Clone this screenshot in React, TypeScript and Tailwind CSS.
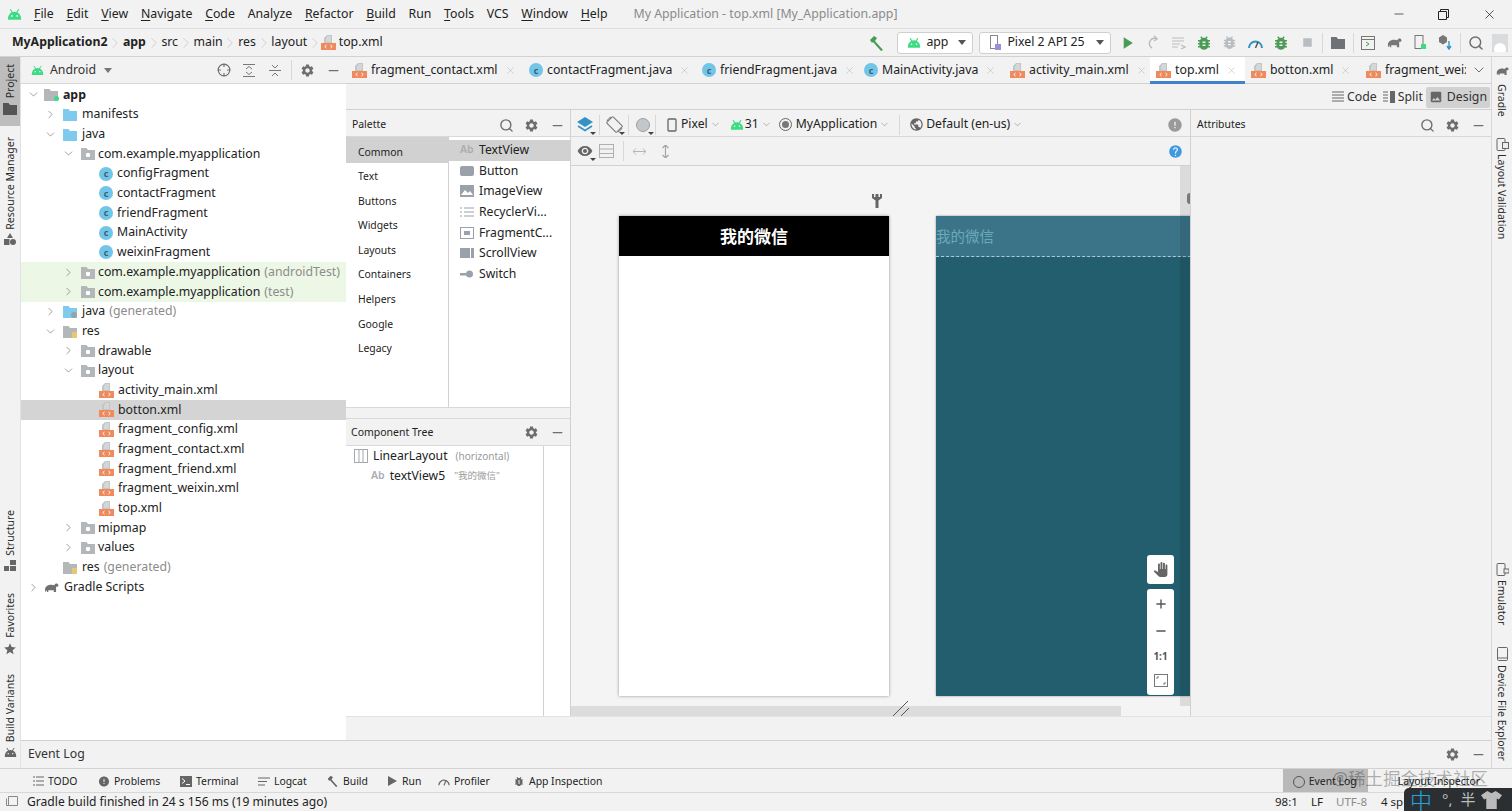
import { ChevronDown, ChevronRight, Search, X, Minus, Plus, Crosshair } from "lucide-react";
import { MdSettings, MdPanTool, MdError, MdHelp, MdVisibility, MdPublic, MdImage, MdBugReport, MdPlayArrow, MdStop, MdStar } from "react-icons/md";

const GRAY = "#6e6e6e";

function Android({ className = "w-[14px] h-[11px]", color = "#3ddc84" }: { className?: string; color?: string }) {
  return (
    <svg className={className} viewBox="0 0 16 12" fill={color}>
      <path d="M1 11C1 7 4 3.5 8 3.5S15 7 15 11V12H1Z" />
      <path d="M3.5 1 6 5M12.5 1 10 5" stroke={color} strokeWidth="1.2" />
      <circle cx="5.2" cy="8" r=".9" fill="#fff" />
      <circle cx="10.8" cy="8" r=".9" fill="#fff" />
    </svg>
  );
}

function Folder({ color = "#b3b7ba", dot = false }: { color?: string; dot?: boolean }) {
  return (
    <svg className="w-[14px] h-[13px] shrink-0" viewBox="0 0 14 13">
      <path d="M0 1H5.5L7 3H14V13H0Z" fill={color} />
      {dot && <rect x="5" y="6" width="4" height="4" rx="1" fill="#fff" />}
    </svg>
  );
}

function ClassIcon() {
  return (
    <span className="w-[14px] h-[14px] shrink-0 rounded-full bg-[#70c5e8] flex items-center justify-center text-[9px] leading-none text-[#3f5f6f] font-bold">
      c
    </span>
  );
}

function XmlIcon() {
  return (
    <svg className="w-[15px] h-[15px] shrink-0" viewBox="0 0 15 15">
      <path d="M6 0H11V8H3V3Z" fill="#c3c5c7" />
      <path d="M6 2H10M5 4H10M5 6H10" stroke="#fff" strokeWidth=".6" />
      <rect x="0" y="8" width="15" height="7" fill="#ee8a5c" />
      <path d="M5.5 10 3.8 11.5 5.5 13M9.5 10 11.2 11.5 9.5 13" stroke="#fff" strokeWidth="1" fill="none" />
    </svg>
  );
}

function Elephant({ className = "w-[16px] h-[12px]", color = "#6e7073" }: { className?: string; color?: string }) {
  return (
    <svg className={className} viewBox="0 0 16 12" fill={color}>
      <path d="M1 11V8C1 5 4 3 8 3C9 3 10 3.5 11 3.5C12 1 15 1 15.5 3.5C15.5 5 14 5.500 13 5V11H10.500V9H4.500V11H3V9Z" />
    </svg>
  );
}

function Vertical({ children, up = true, className = "" }: { children: React.ReactNode; up?: boolean; className?: string }) {
  return (
    <span className={`[writing-mode:vertical-rl] whitespace-nowrap text-[10.5px] leading-none text-[#2b2b2b] ${up ? "rotate-180" : ""} ${className}`}>
      {children}
    </span>
  );
}

type TreeRow = {
  depth: number;
  arrow?: "open" | "closed";
  icon: "folder" | "blue" | "class" | "xml" | "app" | "gradle" | "res" | "blueGen";
  label: string;
  suffix?: string;
  bold?: boolean;
  green?: boolean;
  selected?: boolean;
};

const treeRows: TreeRow[] = [
  { depth: 0, arrow: "open", icon: "app", label: "app", bold: true },
  { depth: 1, arrow: "closed", icon: "blue", label: "manifests" },
  { depth: 1, arrow: "open", icon: "blue", label: "java" },
  { depth: 2, arrow: "open", icon: "folder", label: "com.example.myapplication" },
  { depth: 3, icon: "class", label: "configFragment" },
  { depth: 3, icon: "class", label: "contactFragment" },
  { depth: 3, icon: "class", label: "friendFragment" },
  { depth: 3, icon: "class", label: "MainActivity" },
  { depth: 3, icon: "class", label: "weixinFragment" },
  { depth: 2, arrow: "closed", icon: "folder", label: "com.example.myapplication", suffix: "(androidTest)", green: true },
  { depth: 2, arrow: "closed", icon: "folder", label: "com.example.myapplication", suffix: "(test)", green: true },
  { depth: 1, arrow: "closed", icon: "blueGen", label: "java", suffix: "(generated)" },
  { depth: 1, arrow: "open", icon: "res", label: "res" },
  { depth: 2, arrow: "closed", icon: "folder", label: "drawable" },
  { depth: 2, arrow: "open", icon: "folder", label: "layout" },
  { depth: 3, icon: "xml", label: "activity_main.xml" },
  { depth: 3, icon: "xml", label: "botton.xml", selected: true },
  { depth: 3, icon: "xml", label: "fragment_config.xml" },
  { depth: 3, icon: "xml", label: "fragment_contact.xml" },
  { depth: 3, icon: "xml", label: "fragment_friend.xml" },
  { depth: 3, icon: "xml", label: "fragment_weixin.xml" },
  { depth: 3, icon: "xml", label: "top.xml" },
  { depth: 2, arrow: "closed", icon: "folder", label: "mipmap" },
  { depth: 2, arrow: "closed", icon: "folder", label: "values" },
  { depth: 1, icon: "res", label: "res", suffix: "(generated)" },
  { depth: 0, arrow: "closed", icon: "gradle", label: "Gradle Scripts" },
];

const depthPad = ["pl-[5px]", "pl-[22px]", "pl-[40px]", "pl-[60px]"];
const depthSpacer = ["w-[4px]", "w-[6px]", "w-[6px]", "w-[4px]"];
const depthGap = ["ml-[5px]", "ml-[5px]", "ml-[3px]", "ml-[4px]"];

function RowIcon({ icon }: { icon: TreeRow["icon"] }) {
  if (icon === "class") return <ClassIcon />;
  if (icon === "xml") return <XmlIcon />;
  if (icon === "blue") return <Folder color="#7fcbee" />;
  if (icon === "folder") return <Folder dot />;
  if (icon === "gradle") return <Elephant className="w-[15px] h-[11px] shrink-0" />;
  return (
    <span className="relative shrink-0 flex">
      <Folder color={icon === "blueGen" ? "#7fcbee" : "#b3b7ba"} />
      {icon === "app" && <span className="absolute -right-[1px] bottom-0 w-[5px] h-[5px] rounded-full bg-[#3ddc84]" />}
      {icon === "res" && <span className="absolute right-0 bottom-0 w-[5px] h-[6px] bg-[#e8c86e]" />}
      {icon === "blueGen" && <span className="absolute right-0 bottom-0 w-[6px] h-[6px] rounded-full bg-[#9aa0a6]" />}
    </span>
  );
}

function ProjectTree() {
  return (
    <div className="flex-1 bg-white pt-px overflow-hidden">
      {treeRows.map((r, i) => (
        <div
          key={i}
          className={`h-[19.7px] flex items-center text-[12.3px] text-[#222] ${depthPad[r.depth]} ${
            r.selected ? "bg-[#d4d4d4]" : r.green ? "bg-[#ecf7e6]" : ""
          }`}
        >
          <span className="w-[14px] shrink-0 flex justify-center">
            {r.arrow === "open" && <ChevronDown size={13} color={GRAY} strokeWidth={1.2} />}
            {r.arrow === "closed" && <ChevronRight size={13} color={GRAY} strokeWidth={1.2} />}
          </span>
          <span className={`${depthSpacer[r.depth]} shrink-0`} />
          <RowIcon icon={r.icon} />
          <span className={`${depthGap[r.depth]} whitespace-nowrap ${r.bold ? "font-bold" : ""}`}>{r.label}</span>
          {r.suffix && <span className="ml-[4px] whitespace-nowrap text-[#8c8c8c]">{r.suffix}</span>}
        </div>
      ))}
    </div>
  );
}

const tabs = [
  { label: "fragment_contact.xml", icon: "xml", w: "w-[177px]" },
  { label: "contactFragment.java", icon: "class", w: "w-[173px]" },
  { label: "friendFragment.java", icon: "class", w: "w-[162px]" },
  { label: "MainActivity.java", icon: "class", w: "w-[146px]" },
  { label: "activity_main.xml", icon: "xml", w: "w-[146px]" },
  { label: "top.xml", icon: "xml", w: "w-[95px]", active: true },
  { label: "botton.xml", icon: "xml", w: "w-[115px]" },
];

function EditorTabs() {
  return (
    <div className="h-[27px] flex border-b border-[#d1d1d1] shrink-0">
      {tabs.map((t) => (
        <div
          key={t.label}
          className={`${t.w} relative flex items-center pl-[6px] text-[12.3px] text-[#222] ${t.active ? "bg-white" : ""}`}
        >
          {t.icon === "xml" ? <XmlIcon /> : <ClassIcon />}
          <span className="ml-[4px] whitespace-nowrap">{t.label}</span>
          <X size={11} color="#b5b5b5" strokeWidth={1.2} className="ml-[7px]" />
          {t.active && <span className="absolute left-0 right-0 bottom-[-1px] h-[3px] bg-[#4083c9]" />}
        </div>
      ))}
      <div className="flex-1 flex items-center pl-[6px] text-[12.3px] text-[#222] overflow-hidden">
        <XmlIcon />
        <span className="ml-[4px] w-[81px] overflow-hidden whitespace-nowrap">fragment_weixin.xml</span>
        <ChevronDown size={16} color={GRAY} strokeWidth={1.5} className="ml-[5px]" />
      </div>
    </div>
  );
}

function PanelActions({ search = false }: { search?: boolean }) {
  return (
    <div className="ml-auto flex items-center">
      {search && <Search size={15} color={GRAY} strokeWidth={2.2} className="mr-[10px]" />}
      <MdSettings size={15} color={GRAY} />
      <Minus size={15} color={GRAY} strokeWidth={2} className="ml-[11px] mr-[5px]" />
    </div>
  );
}

const paletteGroups = ["Common", "Text", "Buttons", "Widgets", "Layouts", "Containers", "Helpers", "Google", "Legacy"];

function PaletteGlyph({ i }: { i: number }) {
  const c = "#9aa1ab";
  if (i === 0) return <span className="w-[14px] text-[10.5px] font-semibold text-[#a9adb2]">Ab</span>;
  return (
    <svg className="w-[14px] h-[12px]" viewBox="0 0 14 12">
      {i === 1 && <rect y="1" width="14" height="10" rx="2" fill={c} />}
      {i === 2 && (
        <>
          <rect y="0" width="14" height="12" fill={c} />
          <path d="M1 10 5 5 8 8 10 6 13 10Z" fill="#fff" />
        </>
      )}
      {i === 3 && <path d="M0 2H2M4 2H14M0 6H2M4 6H14M0 10H2M4 10H14" stroke={c} strokeWidth="1" />}
      {i === 4 && (
        <>
          <rect x=".5" y=".5" width="13" height="11" fill="none" stroke={c} />
          <rect x="4" y="4" width="6" height="4" fill={c} />
        </>
      )}
      {i === 5 && (
        <>
          <rect y="1" width="10" height="10" fill={c} />
          <rect x="11" y="1" width="3" height="10" fill={c} />
        </>
      )}
      {i === 6 && (
        <>
          <rect y="5" width="7" height="2.500" fill={c} />
          <circle cx="9.500" cy="6" r="3.500" fill={c} />
        </>
      )}
    </svg>
  );
}

const paletteItems = ["TextView", "Button", "ImageView", "RecyclerVi...", "FragmentC...", "ScrollView", "Switch"];

function Palette() {
  return (
    <div className="w-[225px] flex flex-col border-r border-[#d1d1d1] shrink-0">
      <div className="h-[27px] flex items-center pl-[6px] pt-[4px] text-[10.4px] text-[#222] border-b border-[#d8d8d8] shrink-0">
        Palette
        <PanelActions search />
      </div>
      <div className="h-[271px] flex shrink-0 bg-white border-b border-[#d8d8d8]">
        <div className="w-[103px] border-r border-[#d1d1d1] text-[10.4px] text-[#222]">
          {paletteGroups.map((g, i) => (
            <div key={g} className={`pl-[12px] flex items-center ${i === 0 ? "h-[26px] pt-[5px] bg-[#d1d1d1]" : "h-[24.6px] pt-[3px]"}`}>
              {g}
            </div>
          ))}
        </div>
        <div className="flex-1 pt-[3px] text-[12.2px] text-[#222]">
          {paletteItems.map((p, i) => (
            <div key={p} className={`h-[20.6px] flex items-center pl-[11px] gap-[5px] ${i === 0 ? "bg-[#d1d1d1]" : ""}`}>
              <PaletteGlyph i={i} />
              <span className="whitespace-nowrap">{p}</span>
            </div>
          ))}
        </div>
      </div>
      <div className="h-[11px] shrink-0 border-b border-[#d8d8d8]" />
      <div className="h-[27px] flex items-center pl-[5px] pt-[1px] text-[10.5px] text-[#222] border-b border-[#d8d8d8] shrink-0">
        Component Tree
        <PanelActions />
      </div>
      <div className="flex-1 bg-white flex">
        <div className="w-[198px] border-r border-[#d1d1d1] pl-[8px]">
          <div className="h-[20px] flex items-center text-[12.2px] text-[#222]">
            <svg className="w-[14px] h-[14px]" viewBox="0 0 14 14" fill="none" stroke="#a5a9ad">
              <rect x=".5" y=".5" width="13" height="13" />
              <path d="M5 .5V13.500M9 .5V13.500" />
            </svg>
            <span className="ml-[5px]">LinearLayout</span>
            <span className="ml-[8px] text-[10px] text-[#9a9a9a]">(horizontal)</span>
          </div>
          <div className="h-[20px] flex items-center pl-[17px] text-[12.2px] text-[#222]">
            <span className="text-[10.500px] font-semibold text-[#a9adb2]">Ab</span>
            <span className="ml-[5px]">textView5</span>
            <span className="ml-[9px] text-[9.5px] text-[#9a9a9a]">"我的微信"</span>
          </div>
        </div>
      </div>
    </div>
  );
}

function Sep({ className = "" }: { className?: string }) {
  return <span className={`w-px h-[20px] bg-[#d8d8d8] ${className}`} />;
}

function ToolCorner({ children }: { children: React.ReactNode }) {
  return (
    <span className="relative flex items-center justify-center w-[22px] h-[22px]">
      {children}
      <span className="absolute right-0 bottom-[1px] w-0 h-0 border-x-[3px] border-x-transparent border-t-[3px] border-t-[#444]" />
    </span>
  );
}

function DesignToolbars() {
  const chev = <ChevronDown size={11} color="#888" strokeWidth={1.3} />;
  return (
    <>
      <div className="h-[27px] shrink-0 flex items-center pl-[3px] pt-[3px] pr-[7px] text-[12.2px] text-[#222] border-b border-[#d8d8d8]">
        <ToolCorner>
          <svg className="w-[18px] h-[16px]" viewBox="0 0 18 16">
            <path d="M9 0 17 5 9 10 1 5Z" fill="#3592c4" />
            <path d="M2 9 9 13.500 16 9" stroke="#3592c4" strokeWidth="1.600" fill="none" />
          </svg>
        </ToolCorner>
        <Sep className="ml-[3px]" />
        <span className="ml-[3px]">
          <ToolCorner>
            <svg className="w-[17px] h-[17px]" viewBox="0 0 17 17" fill="none" stroke="#777">
              <rect x="4" y="1.500" width="9" height="14" rx="1" transform="rotate(-45 8.500 8.500)" />
              <path d="M1 5A8 8 0 0 1 5 1M16 12A8 8 0 0 1 12 16" />
            </svg>
          </ToolCorner>
        </span>
        <Sep className="ml-[3px]" />
        <span className="ml-[3px]">
          <ToolCorner>
            <span className="w-[14px] h-[14px] rounded-full bg-[#c3c7cb] border border-[#9aa0a6]" />
          </ToolCorner>
        </span>
        <Sep className="ml-[1px]" />
        <svg className="ml-[11px] w-[10px] h-[14px]" viewBox="0 0 10 14" fill="none" stroke="#666" strokeWidth="1.300">
          <rect x="1" y="1" width="8" height="12" rx="1" />
        </svg>
        <span className="ml-[4px]">Pixel</span>
        <span className="ml-[2px]">{chev}</span>
        <span className="ml-[9px]">
          <Android />
        </span>
        <span className="ml-[1px]">31</span>
        <span className="ml-[2px]">{chev}</span>
        <span className="ml-[7px] w-[13px] h-[13px] rounded-full border border-[#666] flex items-center justify-center">
          <span className="w-[7px] h-[7px] rounded-full bg-[#777]" />
        </span>
        <span className="ml-[4px]">MyApplication</span>
        <span className="ml-[2px]">{chev}</span>
        <Sep className="ml-[9px]" />
        <span className="ml-[9px] flex">
          <MdPublic size={15} color="#666" />
        </span>
        <span className="ml-[2px]">Default (en-us)</span>
        <span className="ml-[2px]">{chev}</span>
        <span className="ml-auto flex">
          <MdError size={16} color="#9a9a9a" />
        </span>
      </div>
      <div className="h-[29px] shrink-0 flex items-center pl-[3px] pr-[7px] border-b border-[#d1d1d1]">
        <ToolCorner>
          <MdVisibility size={16} color="#666" />
        </ToolCorner>
        <svg className="ml-[3px] w-[15px] h-[14px]" viewBox="0 0 15 14" fill="none" stroke="#b0b0b0">
          <rect x=".5" y=".5" width="14" height="13" />
          <path d="M.5 5H14.500M.5 9.500H14.500" />
        </svg>
        <Sep className="ml-[9px] h-[16px]" />
        <svg className="ml-[9px] w-[13px] h-[9px]" viewBox="0 0 13 9" fill="none" stroke="#b5b5b5">
          <path d="M0 4.500H13M3 1.500 0 4.500 3 7.500M10 1.500 13 4.500 10 7.500" />
        </svg>
        <svg className="ml-[15px] w-[9px] h-[13px]" viewBox="0 0 9 13" fill="none" stroke="#a5a5a5" strokeWidth="1.200">
          <path d="M4.500 0V13M1.500 3 4.500 0 7.500 3M1.500 10 4.500 13 7.500 10" />
        </svg>
        <span className="ml-auto flex">
          <MdHelp size={15} color="#3d9ae0" />
        </span>
      </div>
    </>
  );
}

function ZoomControls() {
  return (
    <div className="absolute left-[576px] bottom-[21px] w-[27px] flex flex-col gap-[5px] items-stretch text-[#555]">
      <div className="h-[29px] bg-white rounded-[3px] flex items-center justify-center">
        <MdPanTool size={15} color="#666" />
      </div>
      <div className="h-[106px] bg-white rounded-[3px] flex flex-col items-center justify-around py-[2px]">
        <Plus size={14} strokeWidth={2.4} />
        <Minus size={14} strokeWidth={2.4} />
        <span className="text-[10px] font-bold leading-none">1:1</span>
        <svg className="w-[14px] h-[13px]" viewBox="0 0 14 13" fill="none" stroke="#777">
          <rect x=".5" y=".5" width="13" height="12" />
          <path d="M3 5V3H5M11 8V10H9" />
        </svg>
      </div>
    </div>
  );
}

function Canvas() {
  return (
    <div className="relative flex-1 overflow-hidden bg-[#f4f4f4] pt-[50px] pl-[48px] flex items-start gap-[47px]">
      <div className="w-[270px] h-[480px] bg-white shrink-0 shadow-[0_0_3px_rgba(0,0,0,0.4)]">
        <div className="h-[40px] bg-black flex items-center justify-center text-white text-[17px] font-bold font-['Noto_Sans_CJK_SC',sans-serif]">
          我的微信
        </div>
      </div>
      <div className="w-[270px] h-[480px] bg-[#235e6f] shrink-0 shadow-[0_0_2px_rgba(0,0,0,0.4)]">
        <div className="h-[41px] bg-[#3b7488] border-b border-dashed border-[#a8cdd6] flex items-center text-[14.500px] text-[#6baaba] font-['Noto_Sans_CJK_SC',sans-serif]">
          我的微信
        </div>
      </div>
      {/* wrench above the first frame */}
      <svg className="absolute left-[301px] top-[28px] w-[10px] h-[14px]" viewBox="0 0 10 14" fill="#666">
        <path d="M0 0H2V3H3.500V0H6.500V3H8V0H10V4L6.500 6.500V14H3.500V6.500L0 4Z" />
      </svg>
      {/* canvas scrollbars and resize handle */}
      <div className="absolute right-0 top-0 w-[10px] h-[540px] bg-black/10" />
      <span className="absolute right-0 top-[27px] w-[3px] h-[11px] rounded-l-full bg-[#777]" />
      <div className="absolute left-0 bottom-0 w-[550px] h-[10px] bg-[#dcdcdc]" />
      <svg className="absolute left-[322px] bottom-0 w-[16px] h-[15px]" viewBox="0 0 16 15" stroke="#555" fill="none">
        <path d="M0 15 15 0M8 15 16 7" />
      </svg>
      <ZoomControls />
    </div>
  );
}

function DesignArea() {
  return (
    <div className="w-[620px] flex flex-col border-r border-[#d1d1d1] shrink-0">
      <DesignToolbars />
      <Canvas />
    </div>
  );
}

const menus = [
  ["F", "ile"], ["E", "dit"], ["V", "iew"], ["N", "avigate"], ["C", "ode"], ["", "Analyze"], ["R", "efactor"],
  ["B", "uild"], ["", "Run"], ["T", "ools"], ["", "VCS"], ["W", "indow"], ["H", "elp"],
];

function TitleBar() {
  return (
    <div className="h-[29px] shrink-0 flex items-center text-[12.3px] text-[#222] border-b border-[#dedede]">
      <span className="ml-[7px] mr-[12px] flex">
        <Android className="w-[15px] h-[12px]" />
      </span>
      <div className="flex gap-[12.75px]">
        {menus.map(([u, rest]) => (
          <span key={u + rest}>
            <span className="underline underline-offset-2">{u}</span>
            {rest}
          </span>
        ))}
      </div>
      <span className="ml-[26px] text-[#8a8a8a]">My Application - top.xml [My_Application.app]</span>
      <div className="ml-auto flex items-center">
        <Minus size={14} color="#222" strokeWidth={1.2} />
        <svg className="ml-[32px] w-[11px] h-[11px]" viewBox="0 0 11 11" fill="none" stroke="#222">
          <path d="M.5 2.500H8.500V10.500H.5ZM2.500 2.500V.5H10.500V8.500H8.500" />
        </svg>
        <X size={15} color="#222" strokeWidth={1.2} className="ml-[33px] mr-[15px]" />
      </div>
    </div>
  );
}

function Crumb({ label, bold = false }: { label: string; bold?: boolean }) {
  return (
    <>
      <span className={bold ? "font-bold" : ""}>{label}</span>
      <ChevronRight size={18} color="#c4c4c4" strokeWidth={1} className="mx-[-1.25px]" />
    </>
  );
}

function NavTools() {
  const dim = "#b9bcc0";
  const tools: React.ReactNode[] = [
    <MdPlayArrow size={20} color="#499c54" />,
    <svg className="w-[14px] h-[15px]" viewBox="0 0 14 15" fill="none" stroke={dim} strokeWidth="1.500">
      <path d="M11 4A5 5 0 1 0 6 13" />
      <path d="M8 1 11 4 8 6" />
    </svg>,
    <svg className="w-[14px] h-[14px]" viewBox="0 0 14 14" stroke={dim} strokeWidth="1.200">
      <path d="M0 2H12M0 5H12M0 8H8M0 11H6M9 9 13 11 9 13" fill="none" />
    </svg>,
    <MdBugReport size={18} color="#499c54" />,
    <MdBugReport size={17} color={dim} />,
    <svg className="w-[15px] h-[12px]" viewBox="0 0 15 12" fill="none">
      <path d="M1 11A6.500 6.500 0 0 1 14 11" stroke="#3592c4" strokeWidth="2" />
      <path d="M7.500 11 10 5" stroke="#555" strokeWidth="1.500" />
    </svg>,
    <MdBugReport size={18} color="#4e9a58" />,
    <MdStop size={17} color={dim} />,
    null,
    <Folder color="#6e7276" />,
    null,
    <svg className="w-[14px] h-[14px]" viewBox="0 0 14 14" fill="none" stroke="#777">
      <rect x=".5" y=".5" width="13" height="13" />
      <path d="M.5 3.500H13.500" />
      <path d="M5 6 8 8 5 10" stroke="#499c54" />
    </svg>,
    <Elephant className="w-[15px] h-[13px]" color="#777" />,
    <svg className="w-[12px] h-[15px]" viewBox="0 0 12 15" fill="none" stroke="#777">
      <rect x="1" y=".5" width="8" height="13" />
      <path d="M7 9H12V14H7Z" fill="#3ddc84" stroke="none" />
    </svg>,
    <svg className="w-[14px] h-[15px]" viewBox="0 0 14 15">
      <path d="M5 0 9 2.500V7L5 9.500 1 7V2.500Z" fill="#777" />
      <path d="M11 6V13M9 11 11 14 13 11" stroke="#3592c4" strokeWidth="1.400" fill="none" />
    </svg>,
    null,
    <Search size={16} color={GRAY} strokeWidth={2.2} />,
  ];
  return (
    <div className="flex items-center">
      {tools.map((t, i) =>
        t === null ? (
          <Sep key={i} className="mx-[2px] h-[18px]" />
        ) : (
          <span key={i} className="w-[25.7px] flex justify-center">
            {t}
          </span>
        ),
      )}
      <span className="ml-[3px] mr-[4px] w-[16px] h-[18px] bg-[#d9dbdd] flex items-end justify-center overflow-hidden">
        <span className="w-[12px] h-[12px] rounded-full bg-white translate-y-[3px]" />
      </span>
    </div>
  );
}

function NavBar() {
  return (
    <div className="h-[28px] shrink-0 flex items-center pl-[12px] text-[12.3px] text-[#222] border-b border-[#d1d1d1]">
      <Crumb label="MyApplication2" bold />
      <Crumb label="app" bold />
      <Crumb label="src" />
      <Crumb label="main" />
      <Crumb label="res" />
      <Crumb label="layout" />
      <span className="ml-[-2px] flex">
        <XmlIcon />
      </span>
      <span className="ml-[3px]">top.xml</span>
      <div className="ml-auto flex items-center">
        <svg className="mr-[12px] w-[16px] h-[16px]" viewBox="0 0 16 16" fill="#499c54">
          <path d="M1 5 5 1 8 3 6 6 14 15 12 16 4 7 3 8Z" />
        </svg>
        <div className="w-[76px] h-[22px] bg-white border border-[#cfcfcf] rounded-[3px] flex items-center pl-[9px] gap-[5px] mr-[6px]">
          <Android />
          <span>app</span>
          <span className="ml-auto mr-[6px] border-x-[4px] border-x-transparent border-t-[5px] border-t-[#555]" />
        </div>
        <div className="w-[132px] h-[22px] bg-white border border-[#cfcfcf] rounded-[3px] flex items-center pl-[10px] gap-[6px] mr-[3px]">
          <svg className="w-[11px] h-[15px]" viewBox="0 0 11 15" fill="none" stroke="#888">
            <rect x=".5" y=".5" width="7" height="13" />
            <rect x="5" y="9" width="6" height="6" fill="#9c8fd6" stroke="none" />
          </svg>
          <span>Pixel 2 API 25</span>
          <span className="ml-auto mr-[6px] border-x-[4px] border-x-transparent border-t-[5px] border-t-[#555]" />
        </div>
        <NavTools />
      </div>
    </div>
  );
}

function LeftStrip() {
  return (
    <div className="w-[21px] shrink-0 flex flex-col items-center border-r border-[#e2e2e2]">
      <div className="w-full h-[69px] bg-[#bdbdbd] flex flex-col items-center pt-[7px] gap-[4px]">
        <Vertical>Project</Vertical>
        <span className="flex">
          <Folder color="#555" />
        </span>
      </div>
      <span className="mt-[11px] flex">
        <Vertical>Resource Manager</Vertical>
      </span>
      <svg className="mt-[3px] w-[12px] h-[12px]" viewBox="0 0 12 12" fill="#666">
        <path d="M6 0 9 5H3Z" />
        <rect y="6" width="5.500" height="6" />
        <circle cx="9" cy="9" r="3" />
      </svg>
      <span className="mt-[265px] flex">
        <Vertical>Structure</Vertical>
      </span>
      <svg className="mt-[5px] w-[12px] h-[11px]" viewBox="0 0 12 11" fill="#666">
        <rect x="6" width="6" height="5" />
        <rect y="6" width="5" height="5" />
        <rect x="6" y="6" width="6" height="5" />
      </svg>
      <span className="mt-[22px] flex">
        <Vertical>Favorites</Vertical>
      </span>
      <MdStar size={14} color="#666" className="mt-[4px]" />
      <span className="mt-[18px] flex">
        <Vertical>Build Variants</Vertical>
      </span>
      <Android className="mt-[5px] w-[13px] h-[10px]" color="#666" />
    </div>
  );
}

function RightStrip() {
  return (
    <div className="w-[21px] shrink-0 flex flex-col items-center border-l border-[#d8d8d8] pt-[9px]">
      <Elephant className="w-[13px] h-[10px]" />
      <Vertical up={false} className="mt-[8px]">Gradle</Vertical>
      <svg className="mt-[21px] w-[13px] h-[13px]" viewBox="0 0 13 13" fill="none" stroke="#666">
        <rect x="1" y=".5" width="8" height="12" rx="1" />
        <rect x="6.500" y="4.500" width="6" height="6" fill="#eee" />
      </svg>
      <Vertical up={false} className="mt-[3px]">Layout Validation</Vertical>
      <svg className="mt-[324px] w-[13px] h-[13px]" viewBox="0 0 13 13" fill="none" stroke="#666">
        <rect x="1" y=".5" width="8" height="12" rx="1" />
        <rect x="8" y="6" width="5" height="4" fill="#eee" />
      </svg>
      <Vertical up={false} className="mt-[4px]">Emulator</Vertical>
      <svg className="mt-[22px] w-[11px] h-[14px]" viewBox="0 0 11 14" fill="none" stroke="#666">
        <rect x=".5" y=".5" width="10" height="13" rx="1" />
        <path d="M.5 11H10.500" />
      </svg>
      <Vertical up={false} className="mt-[4px]">Device File Explorer</Vertical>
    </div>
  );
}

const bottomTools: { label: string; icon: React.ReactNode; w: string }[] = [
  {
    label: "TODO",
    w: "w-[66px]",
    icon: (
      <svg className="w-[11px] h-[10px]" viewBox="0 0 11 10" stroke="#666">
        <path d="M0 1H2M3 1H11M0 5H2M3 5H11M0 9H2M3 9H11" />
      </svg>
    ),
  },
  { label: "Problems", w: "w-[82px]", icon: <MdError size={13} color="#666" /> },
  {
    label: "Terminal",
    w: "w-[78px]",
    icon: (
      <svg className="w-[12px] h-[11px]" viewBox="0 0 12 11">
        <rect width="12" height="11" fill="#666" />
        <path d="M2 2.500 5 5 2 7.500M6 8.500H10" stroke="#fff" fill="none" />
      </svg>
    ),
  },
  {
    label: "Logcat",
    w: "w-[69px]",
    icon: (
      <svg className="w-[12px] h-[9px]" viewBox="0 0 12 9" stroke="#666">
        <path d="M0 1H12M0 4.500H9M0 8H7" />
      </svg>
    ),
  },
  {
    label: "Build",
    w: "w-[59px]",
    icon: (
      <svg className="w-[13px] h-[12px]" viewBox="0 0 16 16" fill="#666">
        <path d="M1 5 5 1 8 3 6 6 14 15 12 16 4 7 3 8Z" />
      </svg>
    ),
  },
  {
    label: "Run",
    w: "w-[52px]",
    icon: (
      <svg className="w-[9px] h-[10px]" viewBox="0 0 9 10" fill="#666">
        <path d="M0 0 9 5 0 10Z" />
      </svg>
    ),
  },
  {
    label: "Profiler",
    w: "w-[75px]",
    icon: (
      <svg className="w-[14px] h-[9px]" viewBox="0 0 14 9" fill="none" stroke="#666" strokeWidth="1.400">
        <path d="M1 9A6 6 0 0 1 13 9M7 9 9 4" />
      </svg>
    ),
  },
  {
    label: "App Inspection",
    w: "w-[100px]",
    icon: <MdBugReport size={13} color="#666" />,
  },
];

function BottomBar() {
  return (
    <div className="h-[24px] shrink-0 flex items-center pl-[32px] text-[10.4px] text-[#222] border-t border-[#d1d1d1]">
      {bottomTools.map((t) => (
        <div key={t.label} className={`${t.w} shrink-0 flex items-center gap-[4px] pt-[2px] whitespace-nowrap`}>
          <span className="w-[12px] flex justify-center">{t.icon}</span>
          {t.label}
        </div>
      ))}
      <div className="ml-auto h-full flex items-center">
        <div className="w-[85px] h-full bg-[#b9b9b9] flex items-center pl-[10px] pt-[2px] gap-[4px]">
          <span className="w-[12px] h-[12px] rounded-full border border-[#555]" />
          Event Log
        </div>
        <span className="ml-[30px] mr-[32px] pt-[2px]">Layout Inspector</span>
      </div>
    </div>
  );
}

function StatusBar() {
  return (
    <div className="h-[19px] shrink-0 flex items-center pl-[6px] text-[12.1px] text-[#222] border-t border-[#d8d8d8]">
      <svg className="w-[12px] h-[12px]" viewBox="0 0 12 12" fill="none" stroke="#888">
        <path d="M2.500 9.500H.5V2.500M2.500 9.500V.5H11.500V9.500Z" />
      </svg>
      <span className="ml-[9px]">Gradle build finished in 24 s 156 ms (19 minutes ago)</span>
      <div className="ml-auto flex items-center text-[11.500px] whitespace-nowrap">
        <span className="w-[36px]">98:1</span>
        <span className="w-[25px]">LF</span>
        <span className="w-[45px] text-[#8c8c8c]">UTF-8</span>
        <span className="w-[131px]">4 sp</span>
      </div>
    </div>
  );
}

export default function App() {
  return (
    <div className="relative w-full h-screen overflow-hidden flex flex-col bg-[#f2f2f2] font-['Noto_Sans','Noto_Sans_CJK_SC',sans-serif]">
      <TitleBar />
      <NavBar />
      <div className="flex-1 flex min-h-0">
        <LeftStrip />
        <div className="flex-1 flex flex-col min-w-0">
          <div className="flex-1 flex min-h-0">
            <div className="w-[325px] shrink-0 flex flex-col">
              <div className="h-[27px] shrink-0 flex items-center pl-[10px] text-[12.3px] text-[#333] border-b border-[#d8d8d8]">
                <Android className="w-[13px] h-[10px]" />
                <span className="ml-[6px]">Android</span>
                <span className="ml-[8px] border-x-[4px] border-x-transparent border-t-[5px] border-t-[#777]" />
                <div className="ml-auto flex items-center">
                  <Crosshair size={14} color={GRAY} className="mr-[12px]" />
                  <svg className="w-[12px] h-[13px] mr-[14px]" viewBox="0 0 12 13" stroke="#777" fill="none">
                    <path d="M0 .5H12M0 12.500H12M3 5 6 2.500 9 5M3 8 6 10.500 9 8" />
                  </svg>
                  <svg className="w-[12px] h-[13px] mr-[10px]" viewBox="0 0 12 13" stroke="#777" fill="none">
                    <path d="M0 6.500H12M3 1 6 4 9 1M3 12 6 9 9 12" />
                  </svg>
                  <Sep className="mr-[8px]" />
                  <MdSettings size={15} color={GRAY} className="mr-[11px]" />
                  <Minus size={15} color={GRAY} strokeWidth={2} className="mr-[5px]" />
                </div>
              </div>
              <ProjectTree />
            </div>
            <div className="flex-1 flex flex-col min-w-0">
              <EditorTabs />
              <div className="h-[26px] shrink-0 flex items-center justify-end pt-[1px] text-[12.3px] text-[#333] border-b border-[#d1d1d1] pr-[1px]">
                <svg className="w-[12px] h-[12px]" viewBox="0 0 12 12" stroke="#666">
                  <path d="M0 1H12M0 4H12M0 7H12M0 10H12" />
                </svg>
                <span className="ml-[3px]">Code</span>
                <svg className="ml-[6px] w-[12px] h-[12px]" viewBox="0 0 12 12">
                  <path d="M0 1H5M0 4H5M0 7H5M0 10H5" stroke="#666" />
                  <rect x="7" y="0" width="5" height="12" fill="#666" />
                </svg>
                <span className="ml-[3px]">Split</span>
                <div className="ml-[3px] h-[21px] px-[3px] bg-[#d1d1d1] rounded-[2px] flex items-center gap-[4px]">
                  <MdImage size={14} color="#666" />
                  Design
                </div>
              </div>
              <div className="flex-1 flex min-h-0">
                <Palette />
                <DesignArea />
                <div className="flex-1">
                  <div className="h-[27px] flex items-center pl-[6px] pt-[4px] text-[10.4px] text-[#222] border-b border-[#d8d8d8]">
                    Attributes
                    <PanelActions search />
                  </div>
                </div>
              </div>
              <div className="h-[24px] shrink-0 border-t border-[#e2e2e2]" />
            </div>
          </div>
          <div className="h-[28px] shrink-0 flex items-center pl-[7px] pb-[1px] text-[12.3px] text-[#333] border-t border-[#d1d1d1]">
            Event Log
            <PanelActions />
          </div>
        </div>
        <RightStrip />
      </div>
      <BottomBar />
      <StatusBar />
      {/* screenshot watermark and IME indicator sit on top of the window */}
      <span className="absolute right-[24px] bottom-[24px] text-[17.5px] leading-none text-black/30">@稀土掘金技术社区</span>
      <div className="absolute right-0 bottom-0 w-[108px] h-[23px] rounded-tl-[5px] overflow-hidden bg-[#2c2f31] flex items-center pl-[6px] text-[#bbb] text-[15px] leading-none">
        <span className="text-[#22a7e8] text-[22px] leading-none font-light">中</span>
        <span className="ml-[10px] whitespace-nowrap">°,</span>
        <span className="ml-[8px]">半</span>
        <svg className="ml-[6px] w-[21px] h-[18px]" viewBox="0 0 20 17" fill="#bbb">
          <path d="M6 0 10 2 14 0 20 4 17 8 15 7V17H5V7L3 8 0 4Z" />
        </svg>
      </div>
    </div>
  );
}
